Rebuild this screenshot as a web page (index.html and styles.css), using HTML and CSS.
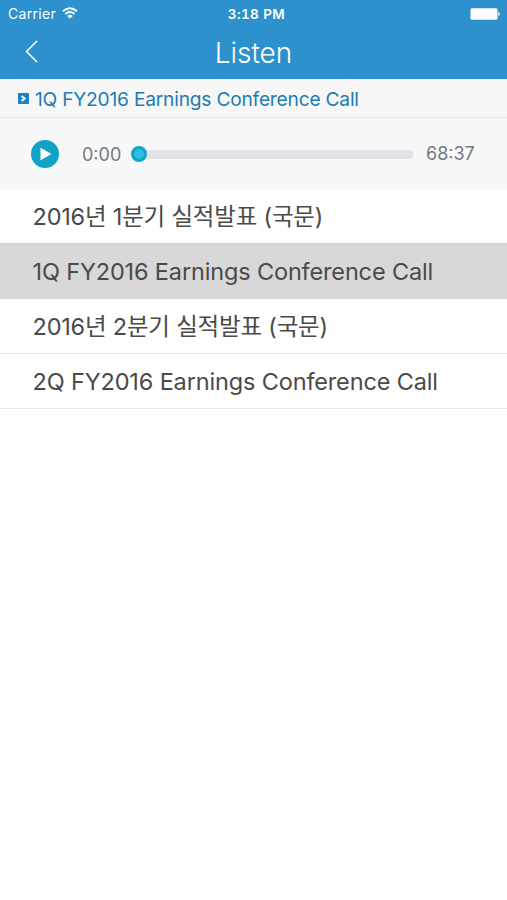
FILE: index.html
```html
<!DOCTYPE html>
<html lang="ko"><head><meta charset="utf-8"><title>Listen</title><link rel="stylesheet" href="styles.css"></head>
<body>
<header class="top">
<div class="status"><div class="carrier"><span>Carrier</span><svg class="wifi" width="16" height="12" viewBox="0 0 16 12"><path d="M1 4.3Q8-1.8 15 4.3M3.4 7Q8 3.1 12.6 7" fill="none" stroke="#fff" stroke-width="1.9"/><path d="M5.2 8.9Q8 6.6 10.8 8.9L8 11.6Z" fill="#fff"/></svg></div><span class="time">3:18 PM</span><svg class="battery" width="30" height="12" viewBox="0 0 30 12"><rect x=".5" y=".3" width="27" height="11.4" rx="1.5" fill="#fff"/><path d="M28.3 4v4q1.5-.5 1.5-2t-1.5-2" fill="#fff"/></svg></div>
<nav class="nav"><svg class="back" width="14" height="24" viewBox="0 0 14 24"><path d="M12 1 1.5 11.5 12 22" fill="none" stroke="#fff" stroke-width="1.5"/></svg><h1>Listen</h1><span></span></nav>
</header>
<div class="now"><svg width="11" height="11" viewBox="0 0 11 11"><rect width="11" height="11" rx=".5" fill="#1b83c0"/><path d="m3.5 3 3.3 2.5L3.5 8" fill="none" stroke="#fff" stroke-width="1.7"/></svg><span>1Q FY2016 Earnings Conference Call</span></div>
<div class="player"><svg class="play" width="28" height="28" viewBox="0 0 28 28"><circle cx="14" cy="14" r="14" fill="#11a3c7"/><path d="M9.5 7.7v12.6L20.5 14z" fill="#fff"/></svg><span class="start">0:00</span><div class="track"><span class="knob"></span></div><span class="end">68:37</span></div>
<ul class="list"><li class="korean"><span>2016년 1분기 실적발표 (국문)</span></li><li class="selected"><span>1Q FY2016 Earnings Conference Call</span></li><li class="korean"><span>2016년 2분기 실적발표 (국문)</span></li><li><span>2Q FY2016 Earnings Conference Call</span></li></ul>
</body></html>
```
FILE: styles.css
```css
*{box-sizing:border-box}
body{margin:0;background:#fff;color:#4a4a4a;font-family:Inter,"Noto Sans CJK KR",sans-serif}
span{white-space:nowrap}
.top{height:79px;background:#2c91cc;color:#fff}
.status{height:27px;display:grid;grid-template-columns:1fr auto 1fr;align-items:center;padding:0 7px 0 8px;font-size:14px}
.carrier{display:flex;align-items:center;gap:6px;letter-spacing:.3px}
.wifi{margin-top:-2px}
.time{margin-left:5px;font-size:13.5px;font-weight:600;font-feature-settings:"tnum";letter-spacing:.4px}
.battery{justify-self:end}
.nav{height:52px;display:grid;grid-template-columns:1fr auto 1fr;align-items:center;padding:0 25px}
.back{margin-top:-2px}
h1{margin:-1px 0 0;font-size:28px;font-weight:300;line-height:32px}
.now{height:39px;display:flex;align-items:center;gap:6px;padding:1px 0 0 18px;background:#f7f7f7;border-bottom:1px solid #eaecec;color:#1d7cb3;font-size:19.2px;letter-spacing:-.22px}
.player{height:71px;display:flex;align-items:center;padding:0 32px 0 31px;background:#f6f8fa;color:#77797b;font-size:18px}
.start{margin:2px 0 0 23px;width:49px}
.track{position:relative;width:283px;height:9px;margin-top:1px;border-radius:5px;background:#e1e3e7}
.knob{position:absolute;left:0;top:-4px;width:16px;height:16px;border-radius:50%;background:#2bbfdd;border:3px solid #11a3c7}
.end{margin-left:12px}
.list{list-style:none;margin:0;padding:0}
.list li{height:55px;display:flex;align-items:center;padding:1px 0 0 32.5px;border-bottom:1px solid #e9e9e9;font-size:23.5px;letter-spacing:-.15px}
.list .korean{padding:0 0 2px 32.5px;letter-spacing:-.2px}
.list .korean:first-child{border-color:#d0d0d0}
.list .selected{background:#d8d8d8;border-color:#d8d8d8}
```
